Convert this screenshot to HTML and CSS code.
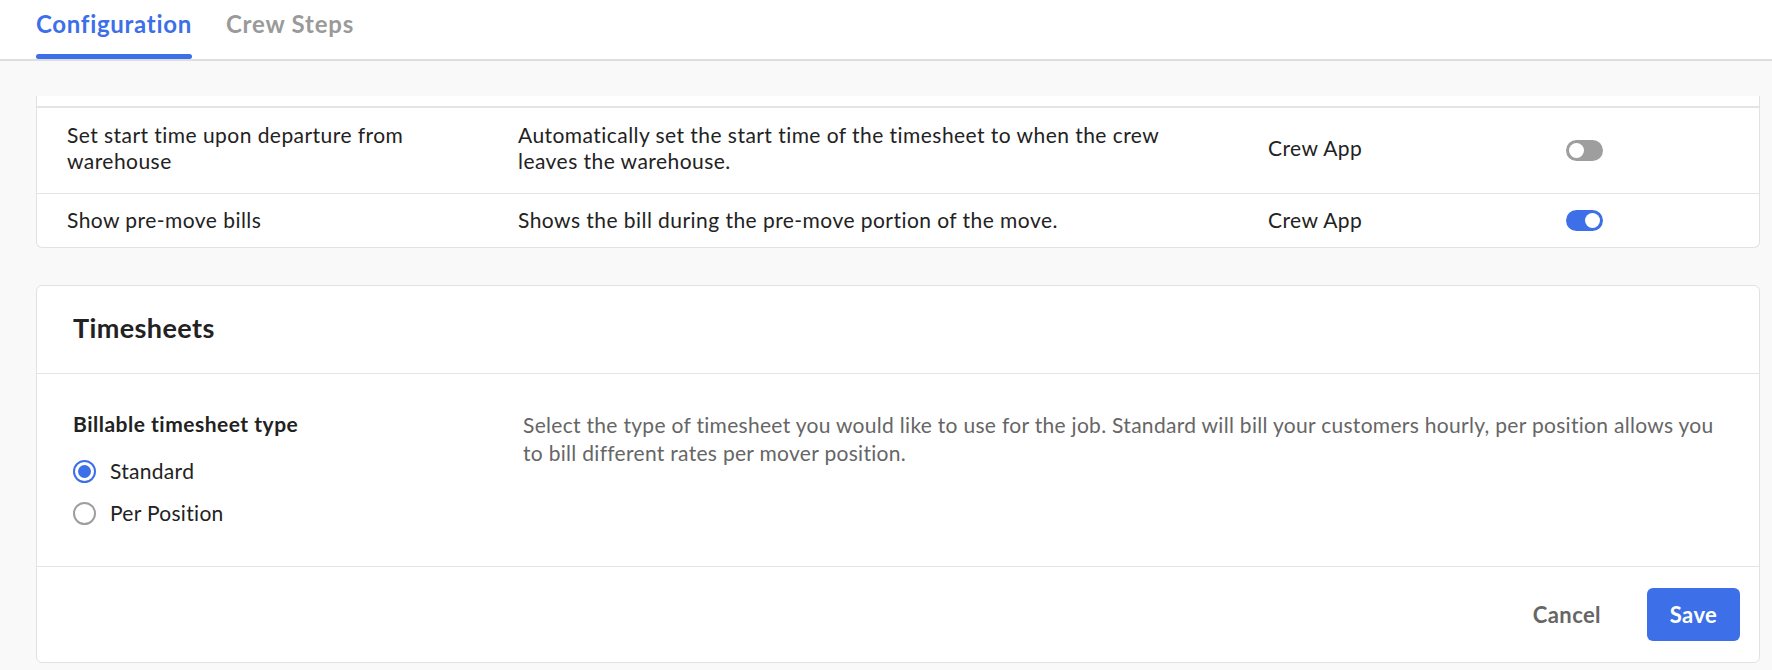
FILE: index.html
```html
<!DOCTYPE html>
<html>
<head>
<meta charset="utf-8">
<link rel="stylesheet" href="styles.css">
</head>
<body>
<header class="tabs">
  <div class="tab active">Configuration</div>
  <div class="tab">Crew Steps</div>
</header>
<main class="content">
  <section class="card settings">
    <div class="settings-top"></div>
    <div class="row">
      <div class="cell name">Set start time upon departure from warehouse</div>
      <div class="cell desc">Automatically set the start time of the timesheet to when the crew leaves the warehouse.</div>
      <div class="cell app">Crew App</div>
      <div class="cell"><span class="toggle"></span></div>
    </div>
    <div class="row">
      <div class="cell name">Show pre-move bills</div>
      <div class="cell desc">Shows the bill during the pre-move portion of the move.</div>
      <div class="cell app">Crew App</div>
      <div class="cell"><span class="toggle on"></span></div>
    </div>
  </section>

  <section class="card timesheets">
    <div class="card-head">Timesheets</div>
    <div class="card-body">
      <div class="field">
        <div class="field-label">Billable timesheet type</div>
        <label class="radio"><span class="dot checked"></span>Standard</label>
        <label class="radio"><span class="dot"></span>Per Position</label>
      </div>
      <p class="help">Select the type of timesheet you would like to use for the job. Standard will bill your customers hourly, per position allows you to bill different rates per mover position.</p>
    </div>
    <div class="card-foot">
      <button class="btn cancel">Cancel</button>
      <button class="btn save">Save</button>
    </div>
  </section>
</main>
</body>
</html>
```
FILE: styles.css
```css
* { box-sizing: border-box; }
html, body { margin: 0; }
body {
  background: #f9f9f9;
  font-family: Lato, "Noto Sans", sans-serif;
  color: #222;
  height: 670px;
  overflow: hidden;
}
.tabs {
  background: #fff;
  height: 61px;
  border-bottom: 2px solid #dedede;
  display: flex;
  gap: 34px;
  padding-left: 36px;
}
.tab {
  font-size: 24px;
  font-weight: 700;
  letter-spacing: 0.8px;
  color: #9a9a9a;
  padding-top: 9px;
  height: 59px;
  position: relative;
}
.tab.active { color: #3d6fe8; letter-spacing: 0.7px; }
.tab.active::after {
  content: "";
  position: absolute;
  left: 0; right: 0;
  bottom: 0;
  height: 5px;
  border-radius: 3px;
  background: #3d6fe8;
}
.content {
  padding: 0 12px 0 36px;
}
.card {
  background: #fff;
  border: 1px solid #e2e2e2;
  border-radius: 6px;
}
.settings {
  margin-top: 35px;
  border-top: none;
  border-top-left-radius: 0;
  border-top-right-radius: 0;
}
.settings-top {
  height: 12px;
  border-bottom: 2px solid #e4e4e4;
}
.row {
  display: grid;
  grid-template-columns: 451px 750px 298px 1fr;
  padding-left: 30px;
  align-items: center;
  font-size: 21px;
  letter-spacing: 0.45px;
  line-height: 26px;
  border-top: 1px solid #e4e4e4;
}
.row:nth-child(2) { border-top: none; padding-top: 14px; padding-bottom: 19px; }
.row:nth-child(3) { padding-top: 13px; padding-bottom: 14px; }
.cell.name { padding-right: 30px; }
.cell.desc { padding-right: 60px; }
.toggle {
  display: block;
  width: 37px;
  height: 21px;
  border-radius: 11px;
  background: #9e9e9e;
  position: relative;
}
.row:nth-child(2) .toggle { margin-top: 4px; }
.toggle::after {
  content: "";
  position: absolute;
  top: 3px; left: 3px;
  width: 15px; height: 15px;
  border-radius: 50%;
  background: #fff;
}
.toggle.on { background: #3d6fe8; }
.toggle.on::after { left: 19px; }

.timesheets { margin-top: 37px; }
.card-head {
  height: 88px;
  display: flex;
  align-items: center;
  padding: 0 0 4px 36px;
  font-size: 27px;
  font-weight: 700;
  letter-spacing: 0.4px;
  color: #222;
  border-bottom: 1px solid #e4e4e4;
}
.card-body {
  display: grid;
  grid-template-columns: 450px 1fr;
  padding: 37px 36px 32px 36px;
  border-bottom: 1px solid #e4e4e4;
}
.field-label {
  font-size: 21px;
  font-weight: 700;
  letter-spacing: 0.5px;
  line-height: 26px;
  margin-bottom: 13px;
}
.radio {
  display: flex;
  align-items: center;
  gap: 14px;
  font-size: 21px;
  letter-spacing: 0.3px;
  line-height: 26px;
  height: 42px;
}
.dot {
  width: 23px; height: 23px;
  border-radius: 50%;
  border: 2px solid #9e9e9e;
  display: inline-block;
  position: relative;
  flex: none;
}
.dot.checked { border-color: #3d6fe8; }
.dot.checked::after {
  content: "";
  position: absolute;
  inset: 3px;
  border-radius: 50%;
  background: #3d6fe8;
}
.help {
  margin: 0;
  font-size: 21px;
  letter-spacing: 0.3px;
  line-height: 28px;
  color: #666;
}
.card-foot {
  display: flex;
  justify-content: flex-end;
  align-items: center;
  gap: 20px;
  padding: 21px 19px 21px 0;
}
.btn {
  font-family: Lato, sans-serif;
  font-size: 22px;
  font-weight: 700;
  letter-spacing: 0.4px;
  border: none;
  border-radius: 6px;
  height: 53px;
  cursor: pointer;
}
.btn.cancel {
  background: transparent;
  color: #666;
  padding: 0 26px 0 29px;
}
.btn.save {
  background: #3d6fe8;
  color: #fff;
  width: 93px;
}
```
